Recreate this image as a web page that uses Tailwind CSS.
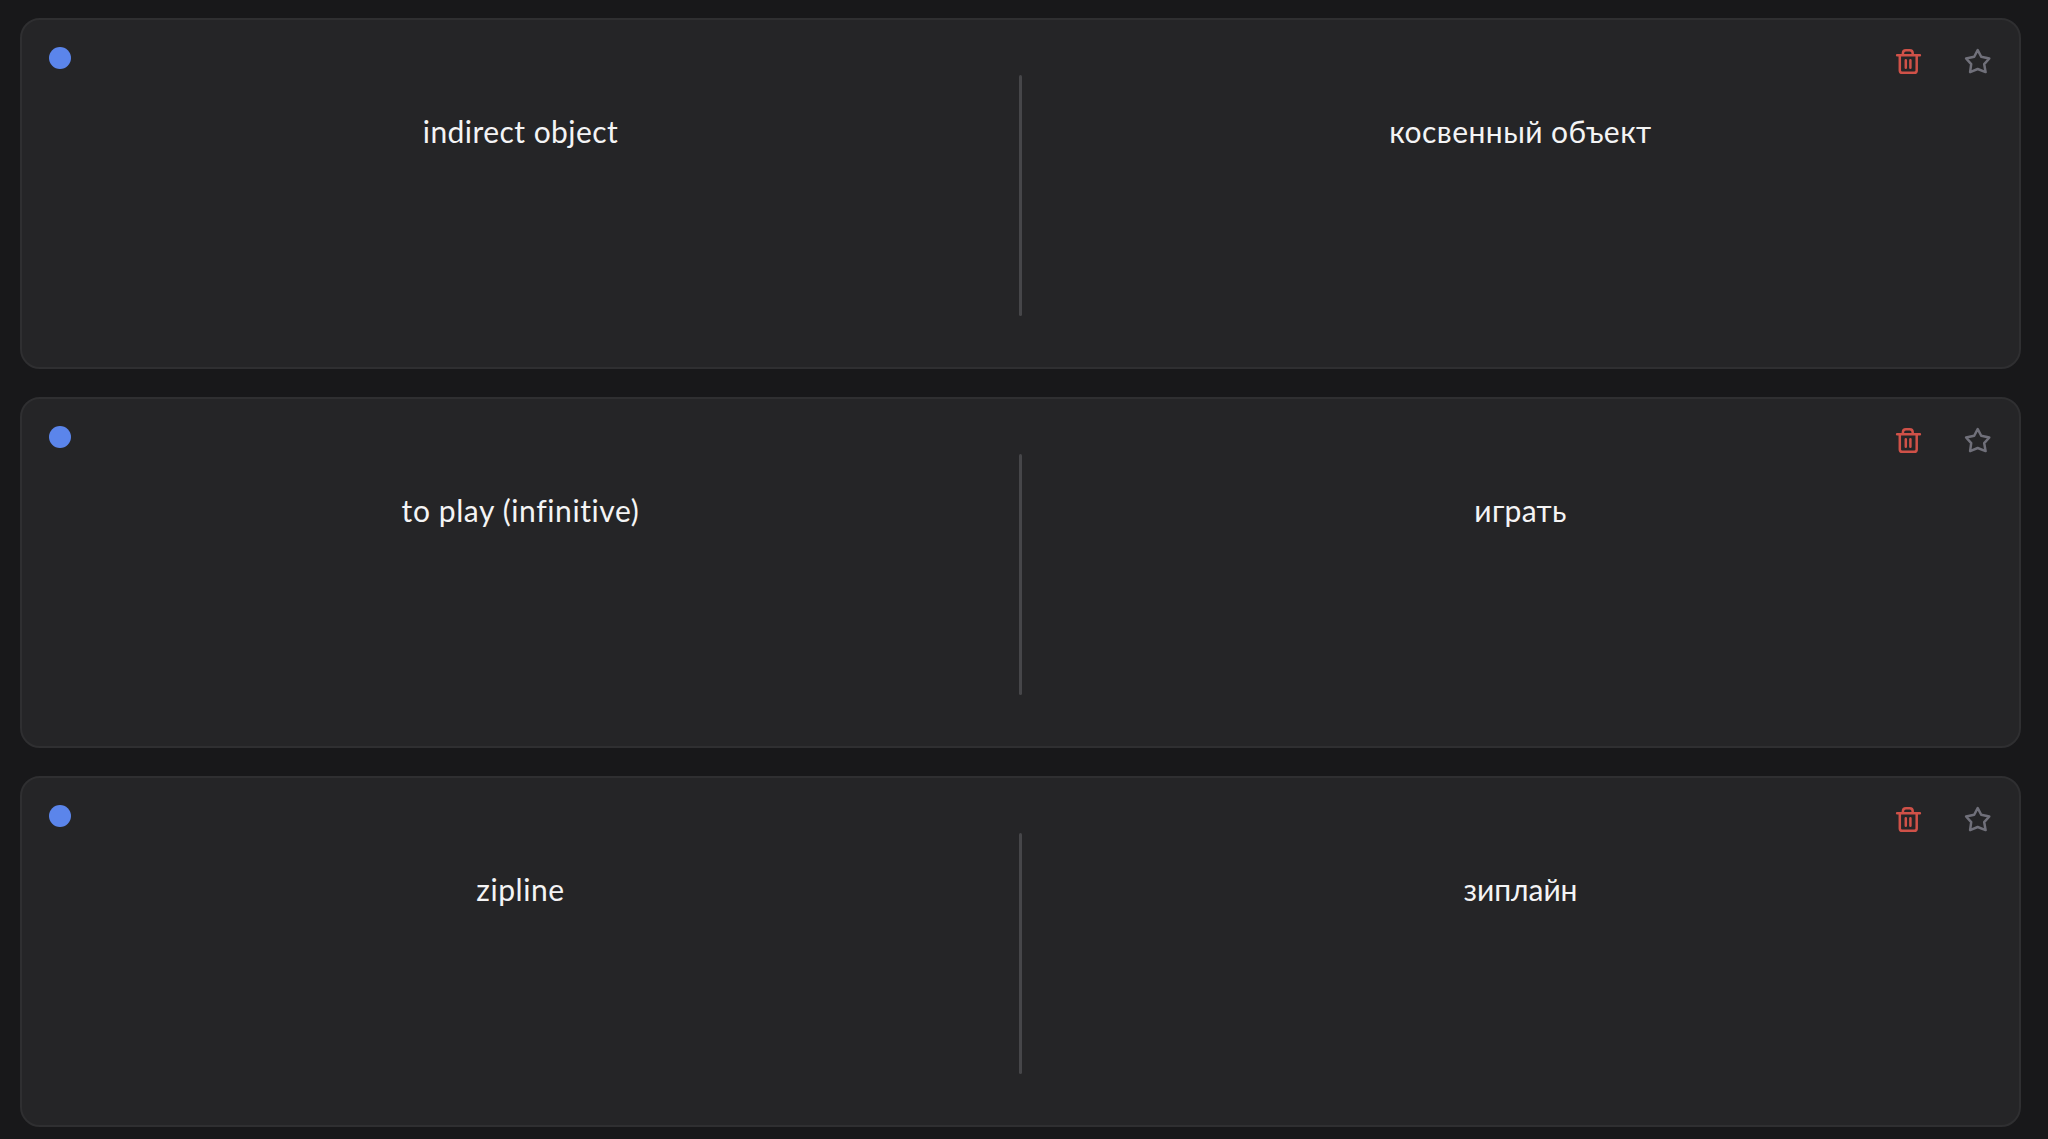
<!DOCTYPE html>
<html lang="en">
<head>
    <meta charset="UTF-8">
    <meta name="viewport" content="width=device-width, initial-scale=1.0">
    <title>Flashcards</title>
    <script src="https://cdn.jsdelivr.net/npm/@tailwindcss/browser@4"></script>
</head>
<body class="bg-[#18181a] font-[Lato,sans-serif] text-[#f4f4f5] h-[1139px] overflow-hidden">
    <!-- Icons -->
    <svg class="hidden">
        <symbol id="trash" viewBox="0 0 28 28">
            <path d="M3.1 8.2H25.9M5.8 8.4V23.4Q5.8 25.8 8.2 25.8H20.3Q22.7 25.8 22.7 23.4V8.4M8.9 7.9V6.3Q8.9 3.3 11.9 3.3H15.7Q18.7 3.3 18.7 6.3V7.9M11.8 13.2V20.8M16.4 13.2V20.8"/>
        </symbol>
        <symbol id="star" viewBox="0 0 28 28">
            <path d="M13.7 3L17.2 9.8L25.3 11.5L20.2 17.2L21.6 25.1L13.7 22L6.1 25.1L7.2 17.2L2.1 11.5L10.2 9.8Z"/>
        </symbol>
    </svg>

    <!-- Card list -->
    <main class="flex flex-col gap-7 pt-[18px] pl-5 w-[2021px]">
        <article class="relative flex h-[351px] rounded-[20px] border-2 border-[#2f2f31] bg-[#252527] pt-[55px]">
            <span class="absolute left-[27px] top-[27px] size-[21.5px] rounded-full bg-[#5b85eb]"></span>
            <div class="flex-1 pt-[34px] text-center text-[30px] leading-[44px] tracking-[0.45px]">indirect object</div>
            <div class="w-[3px] h-[241px] rounded-full bg-[#464649]"></div>
            <div class="flex-1 pt-[34px] text-center text-[30px] leading-[44px] tracking-[0.45px]">косвенный объект</div>
            <div class="absolute right-[27px] top-[27px] flex gap-[42px]">
                <button><svg class="size-7 fill-none stroke-[#cf5148] stroke-[2.5]" stroke-linecap="round" stroke-linejoin="round"><use href="#trash"/></svg></button>
                <button><svg class="size-7 fill-none stroke-[#70707a] stroke-[2.5]" stroke-linecap="round" stroke-linejoin="round"><use href="#star"/></svg></button>
            </div>
        </article>
        <article class="relative flex h-[351px] rounded-[20px] border-2 border-[#2f2f31] bg-[#252527] pt-[55px]">
            <span class="absolute left-[27px] top-[27px] size-[21.5px] rounded-full bg-[#5b85eb]"></span>
            <div class="flex-1 pt-[34px] text-center text-[30px] leading-[44px] tracking-[0.6px]">to play (infinitive)</div>
            <div class="w-[3px] h-[241px] rounded-full bg-[#464649]"></div>
            <div class="flex-1 pt-[34px] text-center text-[30px] leading-[44px] tracking-[0.3px]">играть</div>
            <div class="absolute right-[27px] top-[27px] flex gap-[42px]">
                <button><svg class="size-7 fill-none stroke-[#cf5148] stroke-[2.5]" stroke-linecap="round" stroke-linejoin="round"><use href="#trash"/></svg></button>
                <button><svg class="size-7 fill-none stroke-[#70707a] stroke-[2.5]" stroke-linecap="round" stroke-linejoin="round"><use href="#star"/></svg></button>
            </div>
        </article>
        <article class="relative flex h-[351px] rounded-[20px] border-2 border-[#2f2f31] bg-[#252527] pt-[55px]">
            <span class="absolute left-[27px] top-[27px] size-[21.5px] rounded-full bg-[#5b85eb]"></span>
            <div class="flex-1 pt-[34px] text-center text-[30px] leading-[44px] tracking-[0.55px]">zipline</div>
            <div class="w-[3px] h-[241px] rounded-full bg-[#464649]"></div>
            <div class="flex-1 pt-[34px] text-center text-[30px] leading-[44px] tracking-[-0.05px]">зиплайн</div>
            <div class="absolute right-[27px] top-[27px] flex gap-[42px]">
                <button><svg class="size-7 fill-none stroke-[#cf5148] stroke-[2.5]" stroke-linecap="round" stroke-linejoin="round"><use href="#trash"/></svg></button>
                <button><svg class="size-7 fill-none stroke-[#70707a] stroke-[2.5]" stroke-linecap="round" stroke-linejoin="round"><use href="#star"/></svg></button>
            </div>
        </article>
    </main>
</body>
</html>
